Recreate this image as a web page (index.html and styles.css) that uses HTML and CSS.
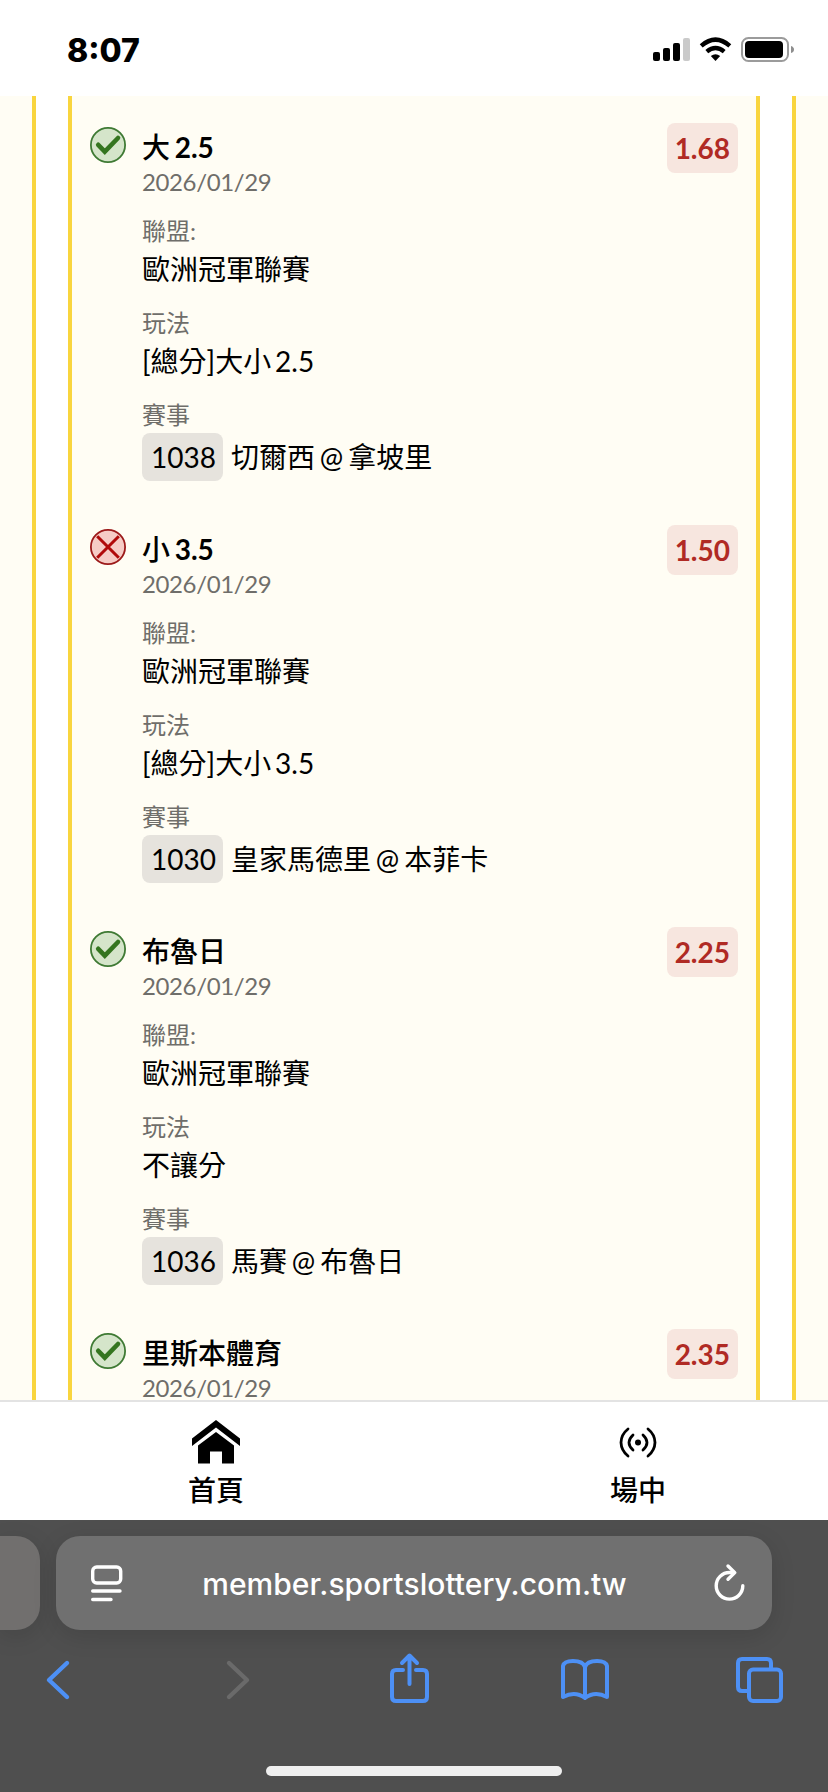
FILE: index.html
```html
<!DOCTYPE html>
<html lang="zh-Hant">
<head>
    <meta charset="UTF-8">
    <meta name="viewport" content="width=device-width, initial-scale=1.0">
    <title>台灣運彩</title>
    <link rel="stylesheet" href="styles.css">
</head>
<body>
    <svg class="defs" width="0" height="0">
        <symbol id="won" viewBox="0 0 36 36">
            <circle cx="18" cy="18" r="17.1" fill="#d5e5ca" stroke="#3f7a34" stroke-width="1.8"/>
            <path d="M8.2 17.8L14.8 24.6L28 11" fill="none" stroke="#34751f" stroke-width="4.6" stroke-linecap="round"/>
        </symbol>
        <symbol id="lost" viewBox="0 0 36 36">
            <circle cx="18" cy="18" r="17.1" fill="#f6ccc6" stroke="#9c1a1a" stroke-width="1.8"/>
            <path d="M7.2 7.2L28.8 28.8M28.8 7.2L7.2 28.8" fill="none" stroke="#b00a0a" stroke-width="3"/>
        </symbol>
    </svg>

    <header class="status">
        <span class="time">8:07</span>
        <svg class="status-icons" width="142" height="26" viewBox="0 0 142 26">
            <rect x="0" y="15" width="7" height="9" rx="2"/>
            <rect x="10" y="11" width="7" height="13" rx="2"/>
            <rect x="20" y="6" width="7" height="18" rx="2"/>
            <rect x="30" y="1" width="7" height="23" rx="2" fill="#cacaca"/>
            <g fill="none" stroke="#000" stroke-width="4.4">
                <path d="M48.2 8.8Q62.5 -3.6 76.8 8.8"/>
                <path d="M53.8 14.6Q62.5 7.4 71.2 14.6"/>
            </g>
            <path d="M57.8 19Q62.5 15.4 67.2 19L62.5 24Z"/>
            <rect x="89" y="1" width="46" height="23" rx="6.5" fill="none" stroke="#9b9b9b" stroke-width="2"/>
            <rect x="92" y="4" width="38" height="17" rx="4"/>
            <path d="M138 9Q141 10 141 12.5Q141 15 138 16Z" fill="#8e8e8e"/>
        </svg>
    </header>

    <main class="page">
        <div class="card">
            <div class="ticket">
                <section class="leg">
                    <svg class="result"><use href="#won"/></svg>
                    <div class="info">
                        <h2>大 <b>2.5</b></h2>
                        <p class="date">2026/01/29</p>
                        <p class="label">聯盟:</p>
                        <p class="value">歐洲冠軍聯賽</p>
                        <p class="label">玩法</p>
                        <p class="value">[總分]大小 2.5</p>
                        <p class="label">賽事</p>
                        <p class="match"><span class="code">1038</span>切爾西 @ 拿坡里</p>
                    </div>
                    <span class="odds">1.68</span>
                </section>
                <section class="leg">
                    <svg class="result"><use href="#lost"/></svg>
                    <div class="info">
                        <h2>小 <b>3.5</b></h2>
                        <p class="date">2026/01/29</p>
                        <p class="label">聯盟:</p>
                        <p class="value">歐洲冠軍聯賽</p>
                        <p class="label">玩法</p>
                        <p class="value">[總分]大小 3.5</p>
                        <p class="label">賽事</p>
                        <p class="match"><span class="code">1030</span>皇家馬德里 @ 本菲卡</p>
                    </div>
                    <span class="odds">1.50</span>
                </section>
                <section class="leg">
                    <svg class="result"><use href="#won"/></svg>
                    <div class="info">
                        <h2>布魯日</h2>
                        <p class="date">2026/01/29</p>
                        <p class="label">聯盟:</p>
                        <p class="value">歐洲冠軍聯賽</p>
                        <p class="label">玩法</p>
                        <p class="value">不讓分</p>
                        <p class="label">賽事</p>
                        <p class="match"><span class="code">1036</span>馬賽 @ 布魯日</p>
                    </div>
                    <span class="odds">2.25</span>
                </section>
                <section class="leg">
                    <svg class="result"><use href="#won"/></svg>
                    <div class="info">
                        <h2>里斯本體育</h2>
                        <p class="date">2026/01/29</p>
                    </div>
                    <span class="odds">2.35</span>
                </section>
            </div>
        </div>
    </main>

    <nav class="tabs">
        <a class="tab">
            <svg width="48" height="44" viewBox="0 0 48 44">
                <path d="M0 18.5L24 0L48 18.5V26L24 7.5L0 26Z"/>
                <path d="M6 25.5L24 12L42 25.5V43.5H30V31.5H18V43.5H6Z"/>
            </svg>
            <span>首頁</span>
        </a>
        <a class="tab">
            <svg width="48" height="44" viewBox="1 0 48 44">
                <g fill="none" stroke="#000" stroke-width="2.8" stroke-linecap="round">
                    <path d="M15 9Q8.2 14.5 8 22.5Q8.2 30.5 15 36"/>
                    <path d="M20 15Q12 22.5 20 30"/>
                    <path d="M30 15Q38 22.5 30 30"/>
                    <path d="M35 9Q41.8 14.5 42 22.5Q41.8 30.5 35 36"/>
                </g>
                <circle cx="25" cy="22.5" r="3"/>
            </svg>
            <span>場中</span>
        </a>
    </nav>

    <footer class="browser">
        <div class="address-row">
            <div class="prev-tab"></div>
            <div class="address">
                <svg width="34" height="40" viewBox="0 0 34 40" fill="none" stroke="#fff" stroke-width="3.4" stroke-linecap="round">
                    <rect x="2.7" y="4" width="28" height="16" rx="4"/>
                    <path d="M2.7 28H30M2.7 36.5H21"/>
                </svg>
                <span class="domain">member.sportslottery.com.tw</span>
                <svg width="34" height="40" viewBox="0 0 34 40" fill="none" stroke="#fff" stroke-width="3.4" stroke-linecap="round" stroke-linejoin="round">
                    <path d="M20.5 9.5H17.5A13.3 13.3 0 1 0 30.8 22.8"/>
                    <path d="M16 3L22.8 9.6L16 16.2"/>
                </svg>
            </div>
        </div>
        <div class="tools">
            <svg viewBox="0 0 48 60"><path d="M33 13L15 30L33 47" stroke-width="4.4"/></svg>
            <svg viewBox="0 0 48 60" class="disabled"><path d="M19 13L37 30L19 47" stroke-width="4.4"/></svg>
            <svg viewBox="0 0 48 60">
                <path d="M18 20H11Q7 20 7 24V47Q7 51 11 51H38Q42 51 42 47V24Q42 20 38 20H31"/>
                <path d="M24.5 34V6M17 13L24.5 5.5L32 13"/>
            </svg>
            <svg viewBox="0 0 48 60">
                <path d="M24 48Q14 40.5 2 47V16Q3 11 12 11Q22 11 24 17Q26 11 36 11Q45 11 46 16V47Q34 40.5 24 48V17"/>
            </svg>
            <svg viewBox="0 0 48 60">
                <path d="M11 41H6Q2 41 2 37V13Q2 9 6 9H31Q35 9 35 13V19"/>
                <rect x="13" y="19.5" width="32" height="31.5" rx="4"/>
            </svg>
        </div>
        <div class="home-bar"></div>
    </footer>
</body>
</html>
```
FILE: styles.css
```css
* {
    box-sizing: border-box;
}
body {
    width: 828px;
    height: 1792px;
    margin: 0;
    display: flex;
    flex-direction: column;
    overflow: hidden;
    background: #fff;
    color: #000;
    font-family: Lato, "Noto Sans CJK TC", sans-serif;
    font-size: 28px;
}
h2, p {
    margin: 0;
}
.defs {
    display: none;
}

/* status bar */
.status {
    flex: none;
    height: 96px;
    padding: 0 33px 0 67px;
    display: flex;
    align-items: center;
    justify-content: space-between;
}
.time {
    font-family: Inter, sans-serif;
    font-size: 32px;
    font-weight: 800;
    padding-top: 5px;
}
.status-icons {
    margin-top: 4px;
}

/* bet list */
.page {
    flex: none;
    height: 1304px;
    padding: 0 32px;
    overflow: hidden;
    background: #fffdf4;
}
.card {
    padding: 0 32px;
    background: #fff;
    border: solid #f9d53e;
    border-width: 0 4px;
}
.ticket {
    height: 1304px;
    padding: 27px 18px 0;
    background: #fffdf4;
    border: solid #f9d53e;
    border-width: 0 4px;
}
.leg {
    display: flex;
    align-items: flex-start;
    padding-bottom: 44px;
}
.result {
    width: 36px;
    height: 36px;
    margin: 4px 16px 0 0;
}
.info {
    flex: 1;
    padding-top: 5px;
}
.info h2 {
    font-size: 28px;
    font-weight: 500;
    line-height: 38px;
    word-spacing: -2.4px;
}
.info h2 b {
    font-weight: 700;
}
.date {
    font-size: 24px;
    line-height: 32px;
    letter-spacing: -0.38px;
    color: #6f6e6a;
}
.label {
    margin-top: 14px;
    font-size: 24px;
    line-height: 36px;
    color: #6f6e6a;
}
.date + .label {
    margin-top: 15px;
}
.value {
    line-height: 40px;
    padding-bottom: 2px;
    word-spacing: -3.2px;
}
.match {
    display: flex;
    line-height: 48px;
    word-spacing: -2.3px;
}
.code {
    margin-right: 8px;
    padding: 0 7px 0 9px;
    background: #e6e3dd;
    border-radius: 8px;
}
.odds {
    padding: 0 8px;
    line-height: 50px;
    font-weight: 700;
    color: #b02a24;
    background: #f7e6df;
    border-radius: 8px;
}

/* site tabs */
.tabs {
    flex: none;
    height: 120px;
    padding: 18px 0 0 5px;
    display: flex;
    border-top: 2px solid #e3e3e3;
}
.tab {
    flex: none;
    width: 422px;
    display: flex;
    flex-direction: column;
    align-items: center;
    font-weight: 500;
    line-height: 36px;
}
.tab span {
    margin-top: 8px;
}

/* browser bar */
.browser {
    flex: 1;
    background: #4f4f4f;
    padding-top: 16px;
}
.address-row {
    display: flex;
    gap: 16px;
    height: 94px;
}
.prev-tab {
    width: 40px;
    background: #716f6e;
    border-radius: 0 24px 24px 0;
    box-shadow: 0 6px 24px rgba(0, 0, 0, 0.12);
}
.address {
    width: 716px;
    padding: 0 26px 0 34px;
    display: flex;
    align-items: center;
    justify-content: space-between;
    background: #707070;
    border-radius: 24px;
    box-shadow: 0 6px 24px rgba(0, 0, 0, 0.12);
}
.domain {
    margin-right: 7px;
    padding-top: 1px;
    color: #fff;
    font-family: Inter, sans-serif;
    font-size: 30px;
    font-weight: 500;
    letter-spacing: 0.04px;
}
.tools {
    display: flex;
    justify-content: space-between;
    padding: 20px 44px 0 34px;
}
.tools svg {
    width: 48px;
    height: 60px;
    fill: none;
    stroke: #4d90f5;
    stroke-width: 4;
    stroke-linecap: round;
    stroke-linejoin: round;
}
.tools svg.disabled {
    stroke: #6a6a6a;
}
.home-bar {
    width: 296px;
    height: 10px;
    margin: 56px auto 0;
    background: #efefef;
    border-radius: 5px;
}
```
